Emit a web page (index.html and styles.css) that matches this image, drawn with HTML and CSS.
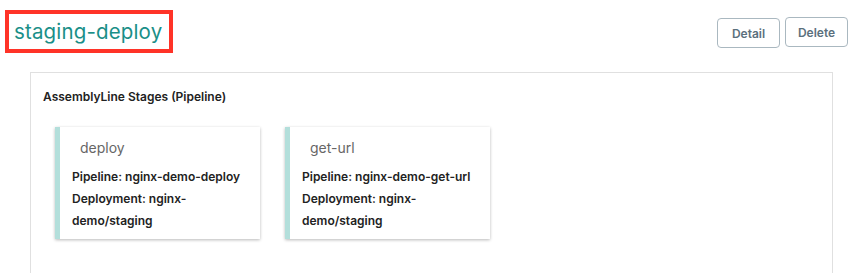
FILE: index.html
```html
<!DOCTYPE html>
<html>
<head>
<meta charset="utf-8">
<link rel="stylesheet" href="styles.css">
</head>
<body>
<div class="header">
  <div class="title-box"><span class="title">staging-deploy</span></div>
  <div class="actions">
    <button class="btn btn-detail">Detail</button>
    <button class="btn">Delete</button>
  </div>
</div>
<div class="panel">
  <div class="panel-title">AssemblyLine Stages (Pipeline)</div>
  <div class="cards">
    <div class="card">
      <div class="card-title">deploy</div>
      <div class="card-body">
        <div>Pipeline: nginx-demo-deploy</div>
        <div>Deployment: nginx-demo/staging</div>
      </div>
    </div>
    <div class="card">
      <div class="card-title">get-url</div>
      <div class="card-body">
        <div>Pipeline: nginx-demo-get-url</div>
        <div>Deployment: nginx-demo/staging</div>
      </div>
    </div>
  </div>
</div>
</body>
</html>
```
FILE: styles.css
```css
html, body {
  margin: 0;
  padding: 0;
  background: #fff;
  font-family: Inter, "Noto Sans", sans-serif;
  overflow: hidden;
}
.header {
  display: flex;
  justify-content: space-between;
  align-items: flex-start;
  padding: 10px 13px 0 5px;
  height: 62px;
  box-sizing: border-box;
}
.title-box {
  border: 4px solid #ff3328;
  height: 35px;
  padding: 0 7px 0 5px;
  display: flex;
  align-items: center;
}
.title {
  color: #1a8f88;
  font-size: 20.5px;
  letter-spacing: 0.15px;
}
.actions {
  display: flex;
  gap: 5px;
  padding-top: 7px;
}
.btn {
  width: 63px;
  height: 30px;
  border: 1px solid #aab8c0;
  border-radius: 4px;
  background: #fff;
  color: #5b707d;
  font-family: Inter, "Noto Sans", sans-serif;
  font-size: 12px;
  font-weight: 600;
  padding: 0;
}
.btn-detail {
  margin-top: 1px;
}
.panel {
  margin: 10px 28px 0 30px;
  border: 1px solid #e0e0e0;
  height: 205px;
  padding: 16px 0 0 12px;
  box-sizing: border-box;
}
.panel-title {
  font-size: 12px;
  font-weight: 600;
  color: #222;
  line-height: 16px;
}
.cards {
  display: flex;
  gap: 25px;
  margin-top: 22px;
  padding-left: 12px;
}
.card {
  width: 205px;
  height: 112px;
  box-sizing: border-box;
  border-left: 5px solid #b3dfdb;
  box-shadow: 0 1px 3px rgba(0, 0, 0, 0.28);
  background: #fff;
}
.card-title {
  padding: 11px 0 0 20px;
  font-size: 14px;
  line-height: 20px;
  color: #666;
}
.card-body {
  padding: 8px 12px 0 12px;
  font-size: 12px;
  font-weight: 600;
  line-height: 22px;
  color: #222;
}
```
